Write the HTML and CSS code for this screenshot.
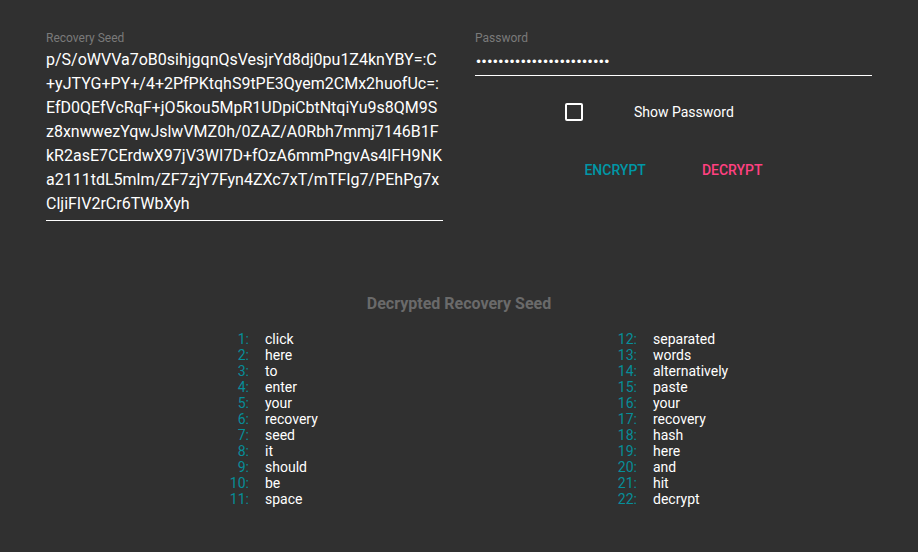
FILE: index.html
```html
<!DOCTYPE html>
<html>
<head>
<meta charset="utf-8">
<link rel="stylesheet" href="styles.css">
</head>
<body>
<div class="page">
  <div class="top">
    <div class="field seed-field">
      <div class="label">Recovery Seed</div>
      <div class="seed">p/S/oWVVa7oB0sihjgqnQsVesjrYd8dj0pu1Z4knYBY=:C +yJTYG+PY+/4+2PfPKtqhS9tPE3Qyem2CMx2huofUc=: EfD0QEfVcRqF+jO5kou5MpR1UDpiCbtNtqiYu9s8QM9S z8xnwwezYqwJslwVMZ0h/0ZAZ/A0Rbh7mmj7146B1F kR2asE7CErdwX97jV3WI7D+fOzA6mmPngvAs4lFH9NK a2111tdL5mlm/ZF7zjY7Fyn4ZXc7xT/mTFIg7/PEhPg7x CljiFIV2rCr6TWbXyh</div>
    </div>
    <div class="right">
      <div class="field">
        <div class="label">Password</div>
        <div class="password">••••••••••••••••••••••••</div>
      </div>
      <div class="check-row">
        <span class="checkbox"></span>
        <span class="check-label">Show Password</span>
      </div>
      <div class="buttons">
        <button class="btn encrypt">ENCRYPT</button>
        <button class="btn decrypt">DECRYPT</button>
      </div>
    </div>
  </div>
  <div class="result">
    <div class="title">Decrypted Recovery Seed</div>
    <div class="words">
      <div class="col">
        <span class="n">1:</span><span class="w">click</span>
        <span class="n">2:</span><span class="w">here</span>
        <span class="n">3:</span><span class="w">to</span>
        <span class="n">4:</span><span class="w">enter</span>
        <span class="n">5:</span><span class="w">your</span>
        <span class="n">6:</span><span class="w">recovery</span>
        <span class="n">7:</span><span class="w">seed</span>
        <span class="n">8:</span><span class="w">it</span>
        <span class="n">9:</span><span class="w">should</span>
        <span class="n">10:</span><span class="w">be</span>
        <span class="n">11:</span><span class="w">space</span>
      </div>
      <div class="col">
        <span class="n">12:</span><span class="w">separated</span>
        <span class="n">13:</span><span class="w">words</span>
        <span class="n">14:</span><span class="w">alternatively</span>
        <span class="n">15:</span><span class="w">paste</span>
        <span class="n">16:</span><span class="w">your</span>
        <span class="n">17:</span><span class="w">recovery</span>
        <span class="n">18:</span><span class="w">hash</span>
        <span class="n">19:</span><span class="w">here</span>
        <span class="n">20:</span><span class="w">and</span>
        <span class="n">21:</span><span class="w">hit</span>
        <span class="n">22:</span><span class="w">decrypt</span>
      </div>
    </div>
  </div>
</div>
</body>
</html>
```
FILE: styles.css
```css
html, body {
  margin: 0;
  padding: 0;
  background: #303030;
  height: 100%;
}
body {
  font-family: Roboto, "Noto Sans", sans-serif;
  color: #fff;
}
.page {
  padding: 30px 46px 0 46px;
}
.top {
  display: grid;
  grid-template-columns: 397px 397px;
  column-gap: 32px;
}
.label {
  font-size: 12px;
  line-height: 16px;
  color: #7a7a7a;
}
.seed {
  margin-top: 2px;
  font-size: 16px;
  line-height: 24px;
  word-break: break-all;
  padding-bottom: 4px;
  border-bottom: 1px solid #fff;
  color: #fff;
}
.password {
  margin-top: 6px;
  font-family: "DejaVu Sans", sans-serif;
  font-size: 12px;
  line-height: 20px;
  letter-spacing: -1.5px;
  padding-bottom: 3px;
  border-bottom: 1px solid #fff;
}
.check-row {
  display: flex;
  align-items: center;
  margin-top: 26px;
  padding-left: 90px;
  height: 20px;
}
.checkbox {
  width: 14px;
  height: 14px;
  border: 2px solid #fff;
  border-radius: 2px;
}
.check-label {
  margin-left: 51px;
  font-size: 14px;
  color: #fff;
}
.buttons {
  display: flex;
  justify-content: center;
  gap: 28px;
  margin-top: 30px;
}
.btn {
  background: none;
  border: none;
  font-family: Roboto, sans-serif;
  font-size: 14px;
  font-weight: 500;
  min-width: 88px;
  height: 36px;
  padding: 0 14px;
}
.encrypt { color: #0097a7; }
.decrypt { color: #ff4081; }
.result {
  margin-top: 73px;
}
.title {
  text-align: center;
  font-size: 16px;
  font-weight: 700;
  color: #6a6a6a;
  line-height: 20px;
}
.words {
  display: grid;
  grid-template-columns: 388px auto;
  padding-left: 163px;
  margin-top: 17px;
}
.col {
  display: grid;
  grid-template-columns: 40px auto;
  column-gap: 16px;
  justify-content: start;
}
.n {
  text-align: right;
  color: #078d99;
  font-size: 14px;
  line-height: 16px;
}
.w {
  color: #fff;
  font-size: 14px;
  line-height: 16px;
}
```
